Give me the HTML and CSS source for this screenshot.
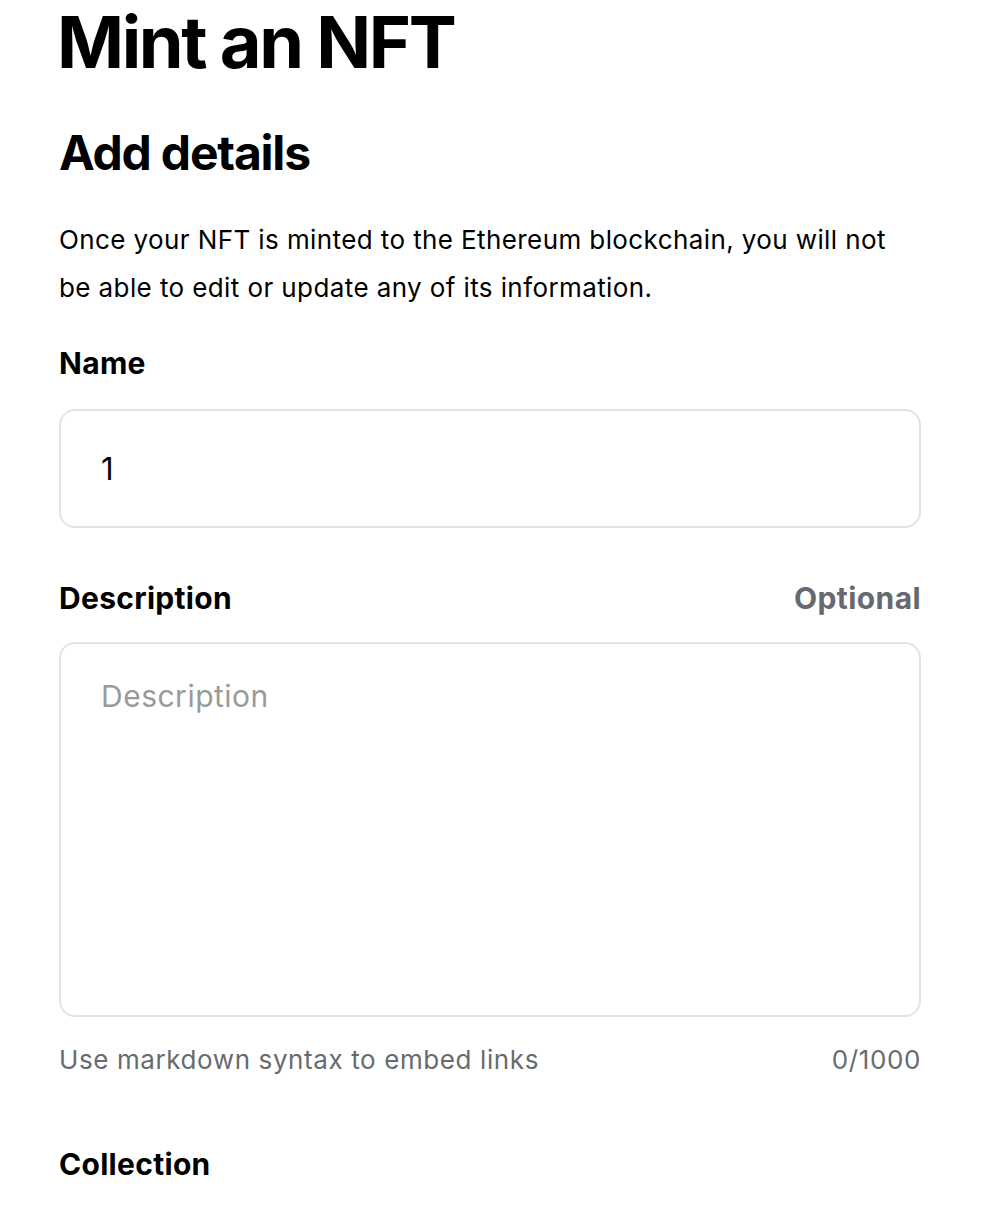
FILE: index.html
```html
<!DOCTYPE html>
<html lang="en">
<head>
<meta charset="utf-8">
<title>Mint an NFT</title>
<link rel="stylesheet" href="styles.css">
</head>
<body>
<main class="page">
  <h1 class="title">Mint an NFT</h1>
  <h2 class="subtitle">Add details</h2>
  <p class="intro">Once your NFT is minted to the Ethereum blockchain, you will not be able to edit or update any of its information.</p>

  <div class="field">
    <div class="label-row name-row"><label class="label" for="name">Name</label></div>
    <div class="input">1</div>
  </div>

  <div class="field">
    <div class="label-row desc-row"><label class="label" for="desc">Description</label><span class="optional">Optional</span></div>
    <div class="textarea"><span class="placeholder">Description</span></div>
    <div class="helper-row"><span>Use markdown syntax to embed links</span><span>0/1000</span></div>
  </div>

  <div class="field">
    <div class="label-row collection-row"><span class="label">Collection</span></div>
  </div>
</main>
</body>
</html>
```
FILE: styles.css
```css
* { box-sizing: border-box; }
html, body { margin: 0; padding: 0; background: #fff; }
body {
  font-family: Inter, "Noto Sans", sans-serif;
  color: #000;
  overflow: hidden;
}
.page {
  width: 862px;
  margin-left: 59px;
  display: flex;
  flex-direction: column;
}
.title {
  margin: 6px 0 0 -2px;
  font-size: 72px;
  line-height: 72px;
  font-weight: 700;
  letter-spacing: -2.4px;
}
.subtitle {
  margin: 47px 0 0;
  font-size: 48px;
  line-height: 56px;
  font-weight: 700;
  letter-spacing: -1.2px;
}
.intro {
  margin: 35px 0 0;
  max-width: 845px;
  font-size: 26px;
  line-height: 48px;
  font-weight: 400;
  letter-spacing: 0.4px;
}
.field { display: flex; flex-direction: column; }
.label-row {
  display: flex;
  justify-content: space-between;
  align-items: baseline;
}
.name-row { margin-top: 31px; }
.desc-row { margin-top: 50px; }
.collection-row { margin-top: 64px; }
.label {
  font-size: 30px;
  line-height: 40px;
  font-weight: 700;
  letter-spacing: 0.3px;
}
.optional {
  font-size: 30px;
  line-height: 40px;
  font-weight: 700;
  letter-spacing: 0.4px;
  color: #666a70;
}
.input {
  margin-top: 26px;
  height: 119px;
  border: 2px solid #e3e3e3;
  border-radius: 16px;
  padding: 0 40px;
  display: flex;
  align-items: center;
  font-size: 31px;
}
.textarea {
  margin-top: 24px;
  height: 375px;
  border: 2px solid #e3e3e3;
  border-radius: 16px;
  padding: 32px 40px;
  font-size: 30px;
  line-height: 40px;
  letter-spacing: 0.5px;
}
.placeholder { color: #9a9a9a; }
.helper-row {
  margin-top: 23px;
  display: flex;
  justify-content: space-between;
  font-size: 26px;
  line-height: 40px;
  letter-spacing: 0.6px;
  color: #676b70;
}
```
